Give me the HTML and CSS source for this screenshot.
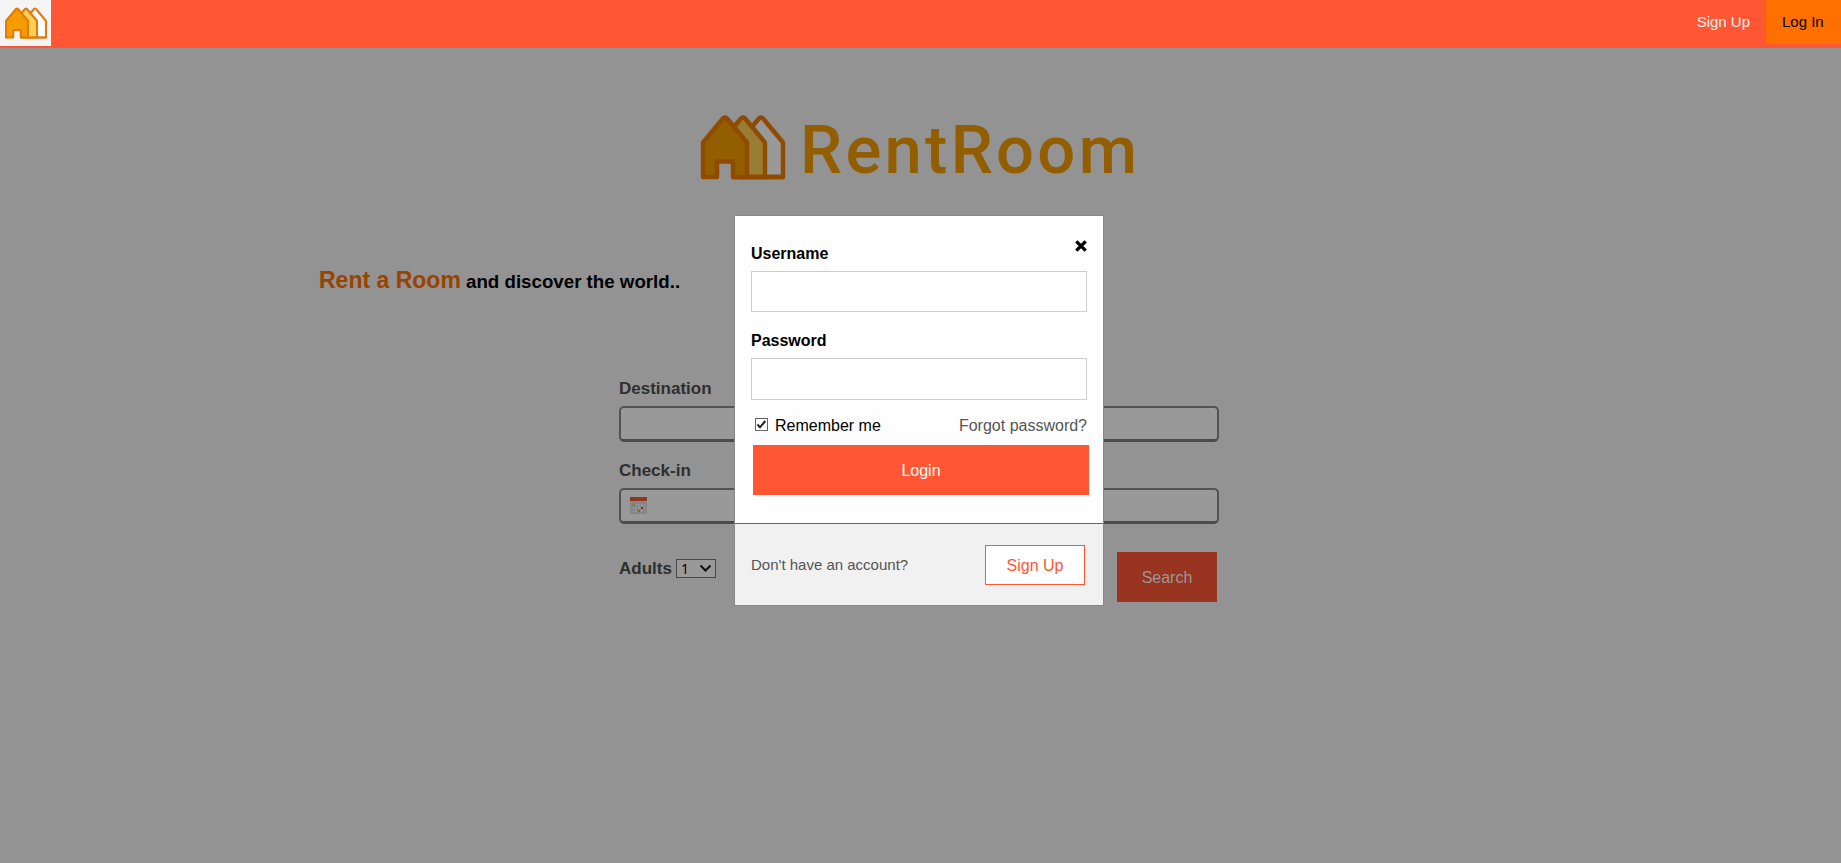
FILE: index.html
```
<!DOCTYPE html>
<html lang="en">
<head>
<meta charset="utf-8">
<title>RentRoom</title>
<link rel="stylesheet" href="styles.css">
</head>
<body>
<header class="topbar">
  <a class="home">
    <svg width="42" height="32" viewBox="0 0 84 64">
      <g stroke="#e27a0c" stroke-width="4.2" stroke-linejoin="round">
        <path fill="#fff" d="M38 61V28L58 4Q60 2 62 4L82 28V61Z"/>
        <path fill="#ffd053" d="M20 61V28L40 4Q42 2 44 4L64 28V61Z"/>
        <path fill="#f59c00" stroke="none" d="M2 61V28L24 2L46 28V61Z"/>
        <path fill="#f5f5f5" stroke="none" d="M17 64V47H31V64Z"/>
        <path fill="none" d="M46 61V28L26 4Q24 2 22 4L2 28V61H16.500V46H31.500V61H82"/>
      </g>
    </svg>
  </a>
  <nav class="links"><a class="link">Sign Up</a><a class="link active">Log In</a></nav>
</header>
<main class="page">
  <svg class="brand" width="460" height="80" viewBox="0 0 460 80">
    <g stroke="#8f4b00" stroke-width="4.4" stroke-linejoin="round">
      <path fill="#999" d="M49 67V32.500L68.500 9Q71 6 73.500 9L93 32.500V67Z"/>
      <path fill="#997d32" d="M31 67V32.500L50.500 9Q53 6 55.500 9L75 32.500V67Z"/>
      <path fill="#935e00" stroke="none" d="M13 67V32.500L35 7L57 32.500V67Z"/>
      <path fill="#939393" stroke="none" d="M28 70V53H42V70Z"/>
      <path fill="none" d="M57 67V32.500L37.500 9Q35 6 32.500 9L13 32.500V67H27V51.500H43V67H93"/>
    </g>
    <text class="brand-text" x="110" y="63" textLength="337">RentRoom</text>
  </svg>
  <h1 class="tagline"><span class="accent">Rent a Room</span> and discover the world..</h1>
  <form class="search">
    <label class="label">Destination</label>
    <div class="field"></div>
    <label class="label">Check-in</label>
    <div class="field">
      <svg class="cal" width="17" height="17" viewBox="0 0 17 17">
        <path fill="#83868b" d="M0 3H17V17H0Z"/>
        <path fill="#96341c" d="M0 0H17V4H0Z"/>
        <path fill="#6f2411" d="M2 1H3V2H2ZM14 1H15V2H14Z"/>
        <path fill="#96999c" d="M6 7h1v2h-1zM8 7h2v2h-2zM11 7h2v2h-2zM14 7h1v2h-1zM3 10h1v2h-1zM5 10h2v2h-2zM8 10h2v2h-2zM14 10h1v2h-1zM3 13h1v2h-1zM5 13h2v2h-2zM11 13h2v2h-2z"/>
        <path fill="#96741f" d="M2.500 7h2v2h-2z"/>
        <path fill="#96341c" d="M11 10h2v2h-2z"/>
        <path fill="#9a5a16" d="M8 13h2v2h-2z"/>
      </svg>
    </div>
    <div class="row">
      <label class="label adults">Adults</label>
      <div class="select"><span>1</span>
        <svg width="13" height="9" viewBox="0 0 13 9"><path d="M1.500 1.500L6.500 6.500L11.500 1.500" fill="none" stroke="#111" stroke-width="2"/></svg>
      </div>
      <a class="submit">Search</a>
    </div>
  </form>
</main>
<section class="modal">
  <div class="login">
    <svg class="close" width="12" height="12" viewBox="0 0 12 12"><path d="M1.300 1.300L10.700 10.700M10.700 1.300L1.300 10.700" stroke="#000" stroke-width="3.300"/></svg>
    <label class="caption">Username</label>
    <div class="input"></div>
    <label class="caption second">Password</label>
    <div class="input tall"></div>
    <div class="options">
      <span class="check"><svg width="11" height="11" viewBox="0 0 11 11"><path d="M1.500 5.500L4 8.300L9.300 2" fill="none" stroke="#222" stroke-width="2"/></svg></span>
      <span>Remember me</span>
      <a class="forgot">Forgot password?</a>
    </div>
    <a class="login-btn">Login</a>
  </div>
  <footer class="join"><span>Don't have an account?</span><a class="join-btn">Sign Up</a></footer>
</section>
</body>
</html>
```
FILE: styles.css
```
* { box-sizing: border-box; }
body {
  margin: 0;
  height: 863px;
  overflow: hidden;
  background: #939393;
  font: 16px/20px "Liberation Sans", Arial, sans-serif;
}
svg { display: block; }
.topbar { display: flex; justify-content: space-between; align-items: flex-start; height: 48px; background: #ff5733; }
.home { width: 51px; height: 46px; padding: 7px 0 0 5px; background: #f5f5f5; }
.links { display: flex; font-size: 15px; }
.link { height: 44px; padding: 12px 16px; color: #f2f2f2; }
.link.active { width: 75px; background: #ff7000; color: #000; white-space: nowrap; }
.page { display: flex; flex-direction: column; padding-top: 62px; }
.brand { margin-left: 690px; }
.brand-text { font: 500 67px Roboto, sans-serif; fill: #935e00; }
.tagline { height: 30px; margin: 75px 0 0 319px; font-size: 18.72px; line-height: 30px; }
.accent { color: #994300; font-size: 23px; }
.search { width: 600px; margin: 84px 0 0 619px; }
.label { display: block; color: #2f2f2f; font-size: 17px; font-weight: bold; line-height: 20px; }
.field { height: 36px; margin: 7px 0 19px; padding: 7px 9px; border: 2px solid #535353; border-bottom: 3px solid #4b4b4b; border-radius: 5px; background: #999; }
.row { display: flex; align-items: flex-start; }
.adults { margin-top: 16px; width: 57px; }
.select { display: flex; align-items: center; justify-content: space-between; width: 40px; height: 19px; margin-top: 16px; padding: 0 3px 0 4px; border: 1px solid #484848; background: #999; font: 14px/17px "Noto Sans", sans-serif; }
.submit { width: 100px; height: 50px; margin: 9px 2px 0 auto; background: #98341f; color: #999; text-align: center; line-height: 51px; }
.modal { position: absolute; left: 734px; top: 215px; width: 370px; height: 391px; border: 1px solid #888; background: #fefefe; }
.login { position: relative; height: 308px; padding: 28px 16px 0; border-bottom: 1px solid #666; }
.close { position: absolute; right: 16px; top: 24px; }
.caption { display: block; font-weight: bold; line-height: 20px; }
.second { margin-top: 19px; }
.input { height: 41px; margin-top: 7px; border: 1px solid #ccc; background: #fff; }
.input.tall { height: 42px; }
.options { display: flex; align-items: flex-start; height: 20px; margin-top: 16px; padding-left: 4px; }
.check { width: 13px; height: 13px; margin: 2px 7px 0 0; border: 1px solid #666; background: #fff; }
.forgot { margin-left: auto; color: #555; }
.login-btn { display: block; width: 336px; height: 50px; margin: 9px 0 0 2px; background: #ff5733; color: #fff; line-height: 51px; text-align: center; }
.join { display: flex; justify-content: space-between; align-items: center; height: 81px; padding: 0 18px 0 16px; background: #f1f1f1; color: #555; font-size: 15px; }
.join-btn { width: 100px; height: 40px; border: 1px solid #ff5733; background: #fff; color: #ff5733; font-size: 16px; line-height: 39px; text-align: center; }
```
